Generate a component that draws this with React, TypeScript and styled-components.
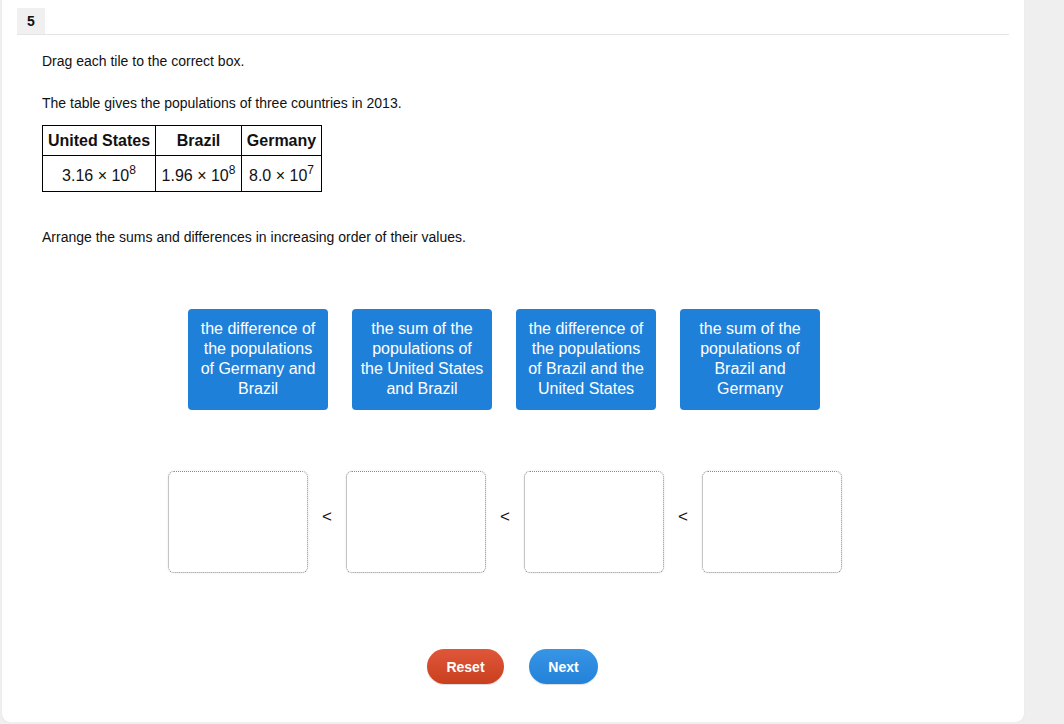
import React from "react";
import styled, { createGlobalStyle } from "styled-components";

const GlobalStyle = createGlobalStyle`
  html, body {
    margin: 0;
    padding: 0;
    background: #efefef;
    font-family: "Liberation Sans", Arial, Helvetica, sans-serif;
    color: #111;
  }
`;

const tiles = [
  "the difference of the populations of Germany and Brazil",
  "the sum of the populations of the United States and Brazil",
  "the difference of the populations of Brazil and the United States",
  "the sum of the populations of Brazil and Germany",
];

const Panel = styled.div`
  width: 1022px;
  height: 722px;
  margin-left: 2px;
  background: #fff;
  border-radius: 0 0 8px 8px;
  box-shadow: 0 0 1px rgba(0, 0, 0, 0.15);
  padding-top: 8px;
  box-sizing: border-box;
`;

const Header = styled.div`
  display: flex;
  margin: 0 15px;
  border-bottom: 1px solid #e4e4e4;
`;

const Badge = styled.div`
  width: 28px;
  height: 26px;
  background: #f0f0f0;
  font-size: 14px;
  font-weight: bold;
  display: flex;
  align-items: center;
  justify-content: center;
`;

const Content = styled.div`
  padding-left: 40px;
`;

const Para = styled.p<{ $top: number }>`
  margin: ${(p) => p.$top}px 0 0;
  font-size: 14px;
  line-height: 18px;
`;

const Table = styled.table`
  margin-top: 13px;
  border-collapse: collapse;
  font-size: 16px;
`;

const Th = styled.th<{ $w: number }>`
  width: ${(p) => p.$w}px;
  height: 30px;
  padding: 0 4px;
  border: 1px solid #000;
  box-sizing: border-box;
  font-weight: bold;
  text-align: center;
`;

const Td = styled.td`
  height: 36px;
  box-sizing: border-box;
  padding: 5px 4px 0;
  border: 1px solid #000;
  text-align: center;
  white-space: nowrap;
  sup {
    font-size: 12px;
    line-height: 0;
    vertical-align: 7px;
  }
`;

const TileRow = styled.div`
  display: flex;
  gap: 24px;
  margin: 63px 0 0 186px;
`;

const Tile = styled.div`
  width: 140px;
  height: 101px;
  box-sizing: border-box;
  padding: 10px 8px 0;
  background: #1f80da;
  border-radius: 4px;
  color: #fff;
  font-size: 16px;
  line-height: 20px;
  text-align: center;
`;

const DropRow = styled.div`
  display: flex;
  align-items: center;
  margin: 61px 0 0 166px;
`;

const Drop = styled.div`
  width: 140px;
  height: 102px;
  box-sizing: border-box;
  border: 1px dotted #8a8a8a;
  border-radius: 6px;
  box-shadow: 0 0 2px rgba(0, 0, 0, 0.12);
`;

const Less = styled.div`
  width: 38px;
  margin-bottom: 10px;
  text-align: center;
  font-size: 17px;
  color: #111;
`;

const Buttons = styled.div`
  display: flex;
  gap: 25px;
  margin: 76px 0 0 425px;
`;

const Btn = styled.button<{ $tone: "red" | "blue"; $w: number }>`
  width: ${(p) => p.$w}px;
  height: 35px;
  border: none;
  border-radius: 18px;
  color: #fff;
  font-family: "Liberation Sans", Arial, sans-serif;
  font-size: 14px;
  font-weight: bold;
  background: ${(p) =>
    p.$tone === "red"
      ? "linear-gradient(#e0563a, #c9401f)"
      : "linear-gradient(#3895e6, #2282d8)"};
  box-shadow: 0 1px 1px rgba(0, 0, 0, 0.15);
`;

export default function App() {
  return (
    <>
      <GlobalStyle />
      <Panel>
        <Header>
          <Badge>5</Badge>
        </Header>
        <Content>
          <Para $top={17}>Drag each tile to the correct box.</Para>
          <Para $top={24}>The table gives the populations of three countries in 2013.</Para>
          <Table>
            <thead>
              <tr>
                <Th $w={113}>United States</Th>
                <Th $w={86}>Brazil</Th>
                <Th $w={80}>Germany</Th>
              </tr>
            </thead>
            <tbody>
              <tr>
                <Td>3.16 × 10<sup>8</sup></Td>
                <Td>1.96 × 10<sup>8</sup></Td>
                <Td>8.0 × 10<sup>7</sup></Td>
              </tr>
            </tbody>
          </Table>
          <Para $top={36}>Arrange the sums and differences in increasing order of their values.</Para>
        </Content>
        <TileRow>
          {tiles.map((t) => (
            <Tile key={t}>{t}</Tile>
          ))}
        </TileRow>
        <DropRow>
          <Drop />
          <Less>&lt;</Less>
          <Drop />
          <Less>&lt;</Less>
          <Drop />
          <Less>&lt;</Less>
          <Drop />
        </DropRow>
        <Buttons>
          <Btn $tone="red" $w={77}>Reset</Btn>
          <Btn $tone="blue" $w={69}>Next</Btn>
        </Buttons>
      </Panel>
    </>
  );
}
